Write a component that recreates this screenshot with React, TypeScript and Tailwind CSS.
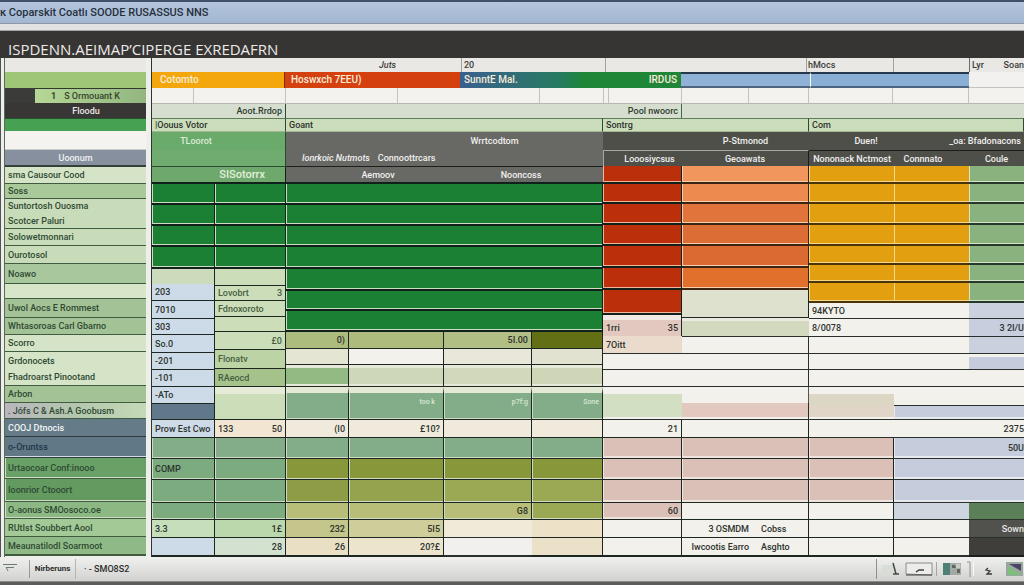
import type { ReactNode } from "react";
import { clsx } from "clsx";

interface Cell {
  c: string;
  t?: ReactNode;
  r?: string;
  span?: number;
}

interface Row {
  h: string;
  cells: Cell[];
}

interface SheetProps {
  label: string;
  cols: number[];
  rows: Row[];
}

const LINE = "border-b border-r border-[#1d2620]";
const ROW = "border-b border-[#2b2f2c]";
const THICK = "border-b-2 border-r border-[#10201a] ";
const EDGE = "shadow-[inset_1px_-1px_0_0_#cfdcc4] ";
const SIDE = "border-b border-[#3f5c41] text-[#2f4a33] ";

const GREEN = THICK + EDGE + "bg-[#1b8034]";
const RED = THICK + "shadow-[inset_1px_-1px_0_0_#f3b49a] bg-[#bb300b]";
const AMBER = "border-b-2 border-[#4a3408] shadow-[inset_1px_-1px_0_0_#f5d789] bg-[#e2a010]";
const MINT = "border-b-2 border-[#26382a] shadow-[inset_1px_-1px_0_0_#d5e5cc] bg-[#8ab27f]";
const BLUE = LINE + " bg-[#cddbe8]";
const PINK = LINE + " shadow-[inset_1px_-2px_0_0_#efe4dd] bg-[#dac0b7]";
const SKY = ROW + " shadow-[inset_1px_-2px_0_0_#e6eaee] bg-[#c5cddc]";
const SAGE = LINE + " " + EDGE + "bg-[#7cab80]";
const TEAL = LINE + " " + EDGE + "bg-[#83ad88]";
const OLIVE = LINE + " " + EDGE + "bg-[#87973a]";
const MOSS = LINE + " " + EDGE + "bg-[#9ba955]";
const KHAKI = LINE + " " + EDGE + "bg-[#b8be78]";
const CREAM = LINE + " bg-[#efeadb]";
const WHITE = LINE + " bg-[#f3f1ec]";
const OPEN = ROW + " bg-[#f3f1ec]";
const HEAD = "border-b border-r border-t border-t-[#5d7d56] border-b-[#9fb893] border-r-[#2f4a33] bg-[#cbddba]";

const Sheet: React.FC<SheetProps> = ({ label, cols, rows }) => {
  const total = cols.reduce((a, b) => a + b, 0);
  return (
    <table aria-label={label} className="w-full table-fixed border-separate border-spacing-0">
      <colgroup>
        {cols.map((w, i) => (
          <col key={i} style={{ width: `${(w / total) * 100}%` }} />
        ))}
      </colgroup>
      <tbody>
        {rows.map((row, i) => (
          <tr key={i} className={row.h}>
            {row.cells.map((cell, j) => (
              <td
                key={j}
                colSpan={cell.span}
                className={clsx("overflow-hidden px-[3px] py-0 whitespace-nowrap", cell.c)}
              >
                {cell.r ? (
                  <div className="flex justify-between">
                    <span>{cell.t}</span>
                    <span>{cell.r}</span>
                  </div>
                ) : (
                  cell.t
                )}
              </td>
            ))}
          </tr>
        ))}
      </tbody>
    </table>
  );
};

const sideRows: Row[] = [
  { h: "h-[14px]", cells: [{ c: "bg-[#e9e8e5]", span: 2 }] },
  { h: "h-[16px]", cells: [{ c: "bg-[#9dc777]", span: 2 }] },
  {
    h: "h-[15px]",
    cells: [
      { c: "bg-[#3b3b39]" },
      {
        c: "border-t border-[#33382f] bg-linear-to-r from-[#b5d796] to-[#92b67f] pl-4 text-[#37472f]",
        t: (
          <span className="flex gap-2">
            <b>1</b>
            <span>S Ormouant K</span>
          </span>
        ),
      },
    ],
  },
  { h: "h-[15px]", cells: [{ c: "bg-[#383735] pl-6 text-center text-[#e8e8e4]", t: "Floodu", span: 2 }] },
  { h: "h-[13px]", cells: [{ c: "border-t border-[#28512d] bg-[#47a153]", span: 2 }] },
  { h: "h-[18px]", cells: [{ c: "bg-[#f4f3f0]", span: 2 }] },
  { h: "h-[18px]", cells: [{ c: "border-t border-b-2 border-t-[#c9cbc8] border-b-[#34403a] bg-[#87909e] text-center text-[#f0f1f3]", t: "Uoonum", span: 2 }] },
  { h: "h-[17px]", cells: [{ c: SIDE + "bg-[#d5e4c6]", t: "sma Causour Cood", span: 2 }] },
  { h: "h-[15px]", cells: [{ c: SIDE + "bg-[#a9c99a]", t: "Soss", span: 2 }] },
  { h: "h-[14px]", cells: [{ c: "bg-[#c9dcb9] text-[#2f4a33]", t: "Suntortosh Ouosma", span: 2 }] },
  { h: "h-[16px]", cells: [{ c: SIDE + "bg-[#c9dcb9]", t: "Scotcer Paluri", span: 2 }] },
  { h: "h-[17px]", cells: [{ c: SIDE + "bg-[#c9dcb9]", t: "Solowetmonnari", span: 2 }] },
  { h: "h-[18px]", cells: [{ c: SIDE + "bg-[#c9dcb9]", t: "Ourotosol", span: 2 }] },
  { h: "h-[20px]", cells: [{ c: SIDE + "bg-[#a8c79d]", t: "Noawo", span: 2 }] },
  { h: "h-[15px]", cells: [{ c: SIDE + "bg-[#d7e5c9]", span: 2 }] },
  { h: "h-[19px]", cells: [{ c: SIDE + "bg-[#a3c396]", t: "Uwol Aocs E Rommest", span: 2 }] },
  { h: "h-[17px]", cells: [{ c: SIDE + "bg-[#a3c396]", t: "Whtasoroas Carl Gbarno", span: 2 }] },
  { h: "h-[17px]", cells: [{ c: SIDE + "bg-[#d5e4c7]", t: "Scorro", span: 2 }] },
  { h: "h-[17px]", cells: [{ c: "bg-[#d5e4c7] text-[#2f4a33]", t: "Grdonocets", span: 2 }] },
  { h: "h-[17px]", cells: [{ c: SIDE + "bg-[#d5e4c7]", t: "Fhadroarst Pinootand", span: 2 }] },
  { h: "h-[17px]", cells: [{ c: SIDE + "bg-[#a3c396]", t: "Arbon", span: 2 }] },
  { h: "h-[16px]", cells: [{ c: SIDE + "bg-linear-to-r from-[#b9b6be] via-[#b4c7ae] to-[#c4dab6]", t: ". Jófs C & Ash.A Goobusm", span: 2 }] },
  { h: "h-[18px]", cells: [{ c: "border-b border-[#2c3a40] bg-[#657c88] text-[#f2f4f4]", t: "COOJ Dtnocis", span: 2 }] },
  { h: "h-[21px]", cells: [{ c: "border-b border-[#2c3a40] bg-[#617987] text-[#22364a] shadow-[inset_0_-1px_0_0_#d4dde0]", t: "o-Oruntss", span: 2 }] },
  { h: "h-[21px]", cells: [{ c: SIDE + EDGE + "bg-[#68a065]", t: "Urtaocoar Conf:inooo", span: 2 }] },
  { h: "h-[23px]", cells: [{ c: SIDE + EDGE + "bg-[#629a60]", t: "Ioonrior Ctooort", span: 2 }] },
  { h: "h-[17px]", cells: [{ c: SIDE + EDGE + "bg-[#8db884]", t: "O-aonus SMOosoco.oe", span: 2 }] },
  { h: "h-[18px]", cells: [{ c: SIDE + "bg-[#a3c996]", t: "RUtIst Soubbert Aool", span: 2 }] },
  { h: "h-[19px]", cells: [{ c: SIDE + "border-b-2 bg-[#8fba87]", t: "Meaunatilodl Soarmoot", span: 2 }] },
];

const votorHead: Row[] = [
  { h: "h-[13px]", cells: [{ c: HEAD, t: "|Oouus Votor", span: 2 }] },
  { h: "h-[18px]", cells: [{ c: "border-r border-[#2c4a30] bg-[#6aaa6b] pr-12 text-center text-[#dcecd6]", t: "TLoorot", span: 2 }] },
  { h: "h-[17px]", cells: [{ c: "border-b border-r border-[#2c4a30] bg-[#70ab6f]", span: 2 }] },
  { h: "h-[17px]", cells: [{ c: "border-b-2 border-r border-[#10201a] bg-[#6fa86d] pr-5 text-right text-[11px] text-[#e2efdc]", t: "SISotorrx", span: 2 }] },
  { h: "h-[21px]", cells: [{ c: GREEN }, { c: GREEN }] },
  { h: "h-[21px]", cells: [{ c: GREEN }, { c: GREEN }] },
  { h: "h-[21px]", cells: [{ c: GREEN }, { c: GREEN }] },
  { h: "h-[22px]", cells: [{ c: GREEN }, { c: GREEN }] },
];

const votorLeft: Row[] = [
  { h: "h-[15px]", cells: [{ c: "border-r border-[#1d2620] bg-[#cddbbd]" }] },
  { h: "h-[17px]", cells: [{ c: BLUE, t: "203" }] },
  { h: "h-[18px]", cells: [{ c: BLUE, t: "7010" }] },
  { h: "h-[16px]", cells: [{ c: BLUE, t: "303" }] },
  { h: "h-[18px]", cells: [{ c: BLUE, t: "So.0" }] },
  { h: "h-[17px]", cells: [{ c: BLUE, t: "-201" }] },
  { h: "h-[17px]", cells: [{ c: BLUE, t: "-101" }] },
  { h: "h-[17px]", cells: [{ c: BLUE, t: "-ATo" }] },
  { h: "h-[16px]", cells: [{ c: LINE + " bg-[#61788a]" }] },
];

const FERN = LINE + " bg-[#cbddb9] text-[#46603f]";
const votorRight: Row[] = [
  { h: "h-[17px]", cells: [{ c: FERN }] },
  { h: "h-[15px]", cells: [{ c: FERN, t: "Lovobrt", r: "3" }] },
  { h: "h-[16px]", cells: [{ c: FERN, t: "Fdnoxoroto" }] },
  { h: "h-[15px]", cells: [{ c: FERN }] },
  { h: "h-[18px]", cells: [{ c: FERN + " text-right", t: "£0" }] },
  { h: "h-[19px]", cells: [{ c: LINE + " bg-[#bcd3a6] text-[#46603f]", t: "Flonatv" }] },
  { h: "h-[18px]", cells: [{ c: LINE + " bg-[#a5c28b] text-[#46603f]", t: "RAeocd" }] },
  { h: "h-[7px]", cells: [{ c: "border-r border-[#1d2620] bg-[#e6ebd8]" }] },
  { h: "h-[26px]", cells: [{ c: FERN }] },
];

const votorFoot: Row[] = [
  { h: "h-[18px]", cells: [{ c: BLUE, t: "Prow Est Cwo" }, { c: LINE + " bg-[#f2e6d2]", t: "133", r: "50" }] },
  { h: "h-[21px]", cells: [{ c: TEAL }, { c: TEAL }] },
  { h: "h-[21px]", cells: [{ c: SAGE, t: "COMP" }, { c: SAGE }] },
  { h: "h-[23px]", cells: [{ c: SAGE }, { c: SAGE }] },
  { h: "h-[17px]", cells: [{ c: SAGE }, { c: SAGE }] },
  { h: "h-[18px]", cells: [{ c: LINE + " bg-[#c6deba]", t: "3.3" }, { c: LINE + " bg-[#bad8ab] text-right", t: "1£" }] },
  { h: "h-[19px]", cells: [{ c: BLUE + " border-b-2" }, { c: LINE + " border-b-2 bg-[#d3e2d0] text-right", t: "28" }] },
];

const GREY = "bg-[#686865] text-[#f0f0ee] ";
const LIP = TEAL + " border-t-[6px] border-t-[#e3e9d5] pb-2 text-right text-[7px] leading-3 text-[#d8e8d2]";
const BAND = LINE + " shadow-[inset_0_3px_0_0_#e6e9d8,inset_0_-2px_0_0_#e4e8d6] ";
const goantRows: Row[] = [
  { h: "h-[13px]", cells: [{ c: HEAD, t: "Goant", span: 4 }] },
  { h: "h-[18px]", cells: [{ c: GREY }, { c: GREY + "pl-10 text-center", t: "Wrrtcodtom", span: 3 }] },
  {
    h: "h-[17px]",
    cells: [
      {
        c: GREY + "border-b border-[#1d1f1d] pl-4",
        span: 4,
        t: (
          <span className="flex gap-2">
            <i>Ionrkoic Nutmots</i>
            <span>Connoottrcars</span>
          </span>
        ),
      },
    ],
  },
  {
    h: "h-[17px]",
    cells: [
      { c: GREY + "border-b-2 border-[#10201a]" },
      { c: GREY + "border-b-2 border-[#10201a] pr-10 text-center", t: "Aemoov" },
      { c: GREY + "border-b-2 border-[#10201a] pr-2 text-center", t: "Nooncoss", span: 2 },
    ],
  },
  { h: "h-[21px]", cells: [{ c: GREEN, span: 4 }] },
  { h: "h-[21px]", cells: [{ c: GREEN, span: 4 }] },
  { h: "h-[21px]", cells: [{ c: GREEN, span: 4 }] },
  { h: "h-[22px]", cells: [{ c: GREEN, span: 4 }] },
  { h: "h-[22px]", cells: [{ c: GREEN, span: 4 }] },
  { h: "h-[20px]", cells: [{ c: GREEN, span: 4 }] },
  { h: "h-[21px]", cells: [{ c: GREEN, span: 4 }] },
  {
    h: "h-[17px]",
    cells: [
      { c: LINE + " bg-[#acbc7d] text-right", t: "0)" },
      { c: LINE + " bg-[#adbc7c]" },
      { c: LINE + " bg-[#b2bf84] text-right", t: "5I.00" },
      { c: LINE + " bg-[#636f14]" },
    ],
  },
  { h: "h-[16px]", cells: [{ c: LINE + " bg-[#e4e5d3]" }, { c: WHITE }, { c: LINE + " bg-[#e8e7da]" }, { c: LINE + " bg-[#e2e2d0]" }] },
  { h: "h-[22px]", cells: [{ c: BAND + "bg-[#94ba84]" }, { c: BAND + "bg-[#ced8b8]" }, { c: BAND + "bg-[#d1d8bb]" }, { c: BAND + "bg-[#cfd5b7]" }] },
  { h: "h-[33px]", cells: [{ c: LIP }, { c: LIP + " pr-2", t: "too k" }, { c: LIP, t: "p7f:g" }, { c: LIP, t: "Sone" }] },
  { h: "h-[18px]", cells: [{ c: CREAM + " text-right", t: "(I0" }, { c: CREAM + " text-right", t: "£10?" }, { c: CREAM }, { c: CREAM }] },
  { h: "h-[21px]", cells: [{ c: TEAL }, { c: TEAL }, { c: TEAL }, { c: TEAL }] },
  { h: "h-[21px]", cells: [{ c: OLIVE }, { c: OLIVE }, { c: OLIVE }, { c: OLIVE }] },
  { h: "h-[23px]", cells: [{ c: LINE + " " + EDGE + "bg-[#8f9c46]" }, { c: LINE + " " + EDGE + "bg-[#95a34e]" }, { c: MOSS }, { c: MOSS }] },
  { h: "h-[17px]", cells: [{ c: KHAKI }, { c: KHAKI }, { c: KHAKI + " text-right", t: "G8" }, { c: MOSS }] },
  {
    h: "h-[18px]",
    cells: [
      { c: LINE + " bg-[#c4c68b] text-right", t: "232" },
      { c: LINE + " bg-[#cfce9b] text-right", t: "5I5" },
      { c: ROW + " bg-[#f1ead8]" },
      { c: LINE + " bg-[#ede2c8]" },
    ],
  },
  {
    h: "h-[19px]",
    cells: [
      { c: LINE + " border-b-2 bg-[#e8dfc4] text-right", t: "26" },
      { c: LINE + " border-b-2 bg-[#ece4cd] text-right", t: "20?£" },
      { c: ROW + " border-b-2 bg-[#f2f0ee]" },
      { c: LINE + " border-b-2 bg-[#ebe1c8]" },
    ],
  },
];

const DARK = "bg-[#4f4f4a] text-[#f0f0ee] ";
const sontrgHead: Row[] = [
  { h: "h-[13px]", cells: [{ c: HEAD, t: "Sontrg", span: 2 }] },
  { h: "h-[18px]", cells: [{ c: DARK }, { c: DARK + "text-center", t: "P-Stmonod" }] },
  {
    h: "h-[16px]",
    cells: [
      { c: DARK + "border-t border-l border-[#a6a6a2] pl-4 text-center", t: "Looosiycsus" },
      { c: DARK + "border-t border-r border-t-[#a6a6a2] border-r-[#1c1c1a] text-center", t: "Geoawats" },
    ],
  },
];

const sontrgLeft: Row[] = [
  { h: "h-[18px]", cells: [{ c: RED }] },
  { h: "h-[20px]", cells: [{ c: RED }] },
  { h: "h-[21px]", cells: [{ c: RED }] },
  { h: "h-[21px]", cells: [{ c: RED }] },
  { h: "h-[22px]", cells: [{ c: RED }] },
  { h: "h-[22px]", cells: [{ c: RED }] },
  { h: "h-[25px]", cells: [{ c: RED }] },
  { h: "h-[5px]", cells: [{ c: "border-r border-[#1d2620] bg-[#efe8e3]" }] },
  { h: "h-[16px]", cells: [{ c: "border-r border-[#1d2620] bg-[#e3c8bf]", t: "1rri", r: "35" }] },
  { h: "h-[18px]", cells: [{ c: ROW + " bg-[#eadbcd]", t: "7Oitt" }] },
  { h: "h-[16px]", cells: [{ c: OPEN }] },
  { h: "h-[17px]", cells: [{ c: OPEN }] },
  { h: "h-[7px]", cells: [{ c: "bg-[#f3f1ec]" }] },
  { h: "h-[26px]", cells: [{ c: ROW + " shadow-[inset_0_-2px_0_0_#f3f1ec] bg-[#d3dfc2]" }] },
];

const ORANGE = "border-b-2 border-r border-[#3c2413] shadow-[inset_1px_-1px_0_0_#f8cfae] ";
const sontrgRight: Row[] = [
  { h: "h-[18px]", cells: [{ c: ORANGE + "bg-[#f1965c]" }] },
  { h: "h-[20px]", cells: [{ c: ORANGE + "bg-[#ec8a4f]" }] },
  { h: "h-[21px]", cells: [{ c: ORANGE + "bg-[#e0743a]" }] },
  { h: "h-[21px]", cells: [{ c: ORANGE + "bg-[#dc6e35]" }] },
  { h: "h-[22px]", cells: [{ c: ORANGE + "bg-[#da6a31]" }] },
  { h: "h-[22px]", cells: [{ c: ORANGE + "bg-[#e2702d]" }] },
  { h: "h-[28px]", cells: [{ c: LINE + " bg-[#dfe1cf]" }] },
  { h: "h-[19px]", cells: [{ c: ROW + " shadow-[inset_0_3px_0_0_#eceadf] bg-[#d3d9bf]" }] },
  { h: "h-[17px]", cells: [{ c: OPEN + " border-r" }] },
  { h: "h-[16px]", cells: [{ c: OPEN + " border-r" }] },
  { h: "h-[17px]", cells: [{ c: OPEN + " border-r" }] },
  { h: "h-[16px]", cells: [{ c: "border-r border-[#55554f] bg-[#f3f1ec]" }] },
  { h: "h-[17px]", cells: [{ c: ROW + " border-r shadow-[inset_0_-2px_0_0_#f3f1ec] bg-[#e1c9c0]" }] },
];

const sontrgFoot: Row[] = [
  { h: "h-[18px]", cells: [{ c: WHITE + " text-right", t: "21" }, { c: WHITE }] },
  { h: "h-[21px]", cells: [{ c: PINK }, { c: PINK }] },
  { h: "h-[21px]", cells: [{ c: PINK }, { c: PINK }] },
  { h: "h-[23px]", cells: [{ c: PINK }, { c: PINK }] },
  { h: "h-[17px]", cells: [{ c: PINK + " text-right", t: "60" }, { c: WHITE }] },
  {
    h: "h-[18px]",
    cells: [
      { c: WHITE },
      {
        c: WHITE,
        t: (
          <span className="flex gap-3">
            <span className="w-16 text-right">3 OSMDM</span>
            <span>Cobss</span>
          </span>
        ),
      },
    ],
  },
  {
    h: "h-[19px]",
    cells: [
      { c: WHITE + " border-b-2" },
      {
        c: WHITE + " border-b-2",
        t: (
          <span className="flex gap-3">
            <span className="w-16 text-right">Iwcootis Earro</span>
            <span>Asghto</span>
          </span>
        ),
      },
    ],
  },
];

const comRows: Row[] = [
  { h: "h-[13px]", cells: [{ c: HEAD, t: "Com", span: 3 }] },
  { h: "h-[18px]", cells: [{ c: DARK + "pl-8 text-center", t: "Duen!" }, { c: DARK + "text-right", t: "_oa: Bfadonacons", span: 2 }] },
  {
    h: "h-[16px]",
    cells: [
      { c: DARK + "border-t border-[#1c1c1a] text-right", t: "Nononack Nctmost" },
      { c: DARK + "border-t border-[#1c1c1a] pr-5 text-center", t: "Connnato" },
      { c: DARK + "border-t border-[#1c1c1a] text-center", t: "Coule" },
    ],
  },
  { h: "h-[18px]", cells: [{ c: AMBER }, { c: AMBER }, { c: MINT }] },
  { h: "h-[20px]", cells: [{ c: AMBER }, { c: AMBER }, { c: MINT }] },
  { h: "h-[21px]", cells: [{ c: AMBER }, { c: AMBER }, { c: MINT }] },
  { h: "h-[21px]", cells: [{ c: AMBER }, { c: AMBER }, { c: MINT }] },
  { h: "h-[19px]", cells: [{ c: AMBER }, { c: AMBER }, { c: MINT }] },
  { h: "h-[18px]", cells: [{ c: AMBER }, { c: AMBER }, { c: MINT }] },
  { h: "h-[20px]", cells: [{ c: AMBER }, { c: AMBER }, { c: MINT }] },
  { h: "h-[16px]", cells: [{ c: OPEN, t: "94KYTO", span: 2 }, { c: ROW + " bg-[#cbd2df]" }] },
  { h: "h-[18px]", cells: [{ c: OPEN, t: "8/0078", span: 2 }, { c: ROW + " bg-[#c7cedd] pr-0 text-right", t: "3 2I/U" }] },
  { h: "h-[17px]", cells: [{ c: OPEN, span: 2 }, { c: ROW + " bg-[#c9d0de]" }] },
  { h: "h-[16px]", cells: [{ c: OPEN, span: 2 }, { c: ROW + " shadow-[inset_0_3px_0_0_#f3f1ec] bg-[#c5cddd]" }] },
  { h: "h-[17px]", cells: [{ c: OPEN, span: 3 }] },
  { h: "h-[7px]", cells: [{ c: "bg-[#f3f1ec]", span: 3 }] },
  { h: "h-[12px]", cells: [{ c: "bg-[#dcd7c4]" }, { c: OPEN, span: 2 }] },
  { h: "h-[14px]", cells: [{ c: ROW + " shadow-[inset_0_-2px_0_0_#f3f1ec] bg-[#e0d5c6]" }, { c: SKY, span: 2 }] },
  { h: "h-[18px]", cells: [{ c: OPEN }, { c: OPEN + " pr-0 text-right", t: "2375", span: 2 }] },
  { h: "h-[21px]", cells: [{ c: PINK }, { c: SKY + " pr-0 text-right", t: "50U", span: 2 }] },
  { h: "h-[21px]", cells: [{ c: PINK }, { c: SKY, span: 2 }] },
  { h: "h-[23px]", cells: [{ c: PINK }, { c: SKY, span: 2 }] },
  { h: "h-[17px]", cells: [{ c: WHITE }, { c: ROW + " bg-[#cdd5de]" }, { c: ROW + " bg-[#5b7f57]" }] },
  { h: "h-[18px]", cells: [{ c: WHITE }, { c: OPEN }, { c: ROW + " bg-[#51514d] pr-0 text-right text-[#e8e8e4]", t: "Sown" }] },
  { h: "h-[19px]", cells: [{ c: WHITE + " border-b-2" }, { c: OPEN + " border-b-2" }, { c: "border-b-2 border-[#1d1f1d] bg-[#3f3e3b]" }] },
];

const TICK = "border-r border-[#c4c3be] ";

const Strips: React.FC = () => (
  <>
    <div className="grid h-[14px] grid-cols-[227fr_82fr_145fr_200fr_88fr_75fr_55fr] bg-[#e9e8e5] leading-[14px] whitespace-nowrap text-[#3d3d3b]">
      <div />
      <i>Juts</i>
      <div className="border-x border-[#a3a29e] px-0.5">20</div>
      <div />
      <div className="border-r border-l border-[#a3a29e] px-px">hMocs</div>
      <div />
      <div className="flex justify-between overflow-hidden border-l border-[#6d6c69] pl-0.5">
        <span>Lyr</span>
        <span>Soan</span>
      </div>
    </div>
    <div className="grid h-[16px] grid-cols-[133fr_175fr_221fr_129fr_159fr_55fr] text-[10px] leading-4 font-medium whitespace-nowrap text-[#f8ecd8]">
      <div className="border-r border-[#6b3413] bg-[#f4a70d] px-2">Cotomto</div>
      <div className="bg-[#d4410f] px-1.5">Hoswxch 7EEU)</div>
      <div className="flex justify-between bg-linear-to-r from-[#3a5f8e] via-[#267a60] via-45% to-[#1f8638] to-55% px-1">
        <span>SunntE Mal.</span>
        <span>IRDUS</span>
      </div>
      <div className="border-y-2 border-t-[#27374c] border-b-[#4c6480] bg-[#8fb2d6]" />
      <div className="border-y-2 border-l border-t-[#27374c] border-b-[#4c6480] border-l-white bg-[#8aafd5]" />
      <div className="border-b border-[#c4c3be] bg-[#f3f1f0]" />
    </div>
    <div className="grid h-[15px] grid-cols-[42fr_92fr_112fr_142fr_64fr_5fr_73fr_67fr_60fr_84fr_76fr_55fr] bg-[#f3f2ef]">
      <div className={TICK} />
      <div className={TICK} />
      <div className={TICK} />
      <div className={TICK} />
      <div className={TICK} />
      <div className={TICK} />
      <div className={TICK} />
      <div className={TICK} />
      <div className={TICK} />
      <div className={TICK} />
      <div className={TICK} />
      <div />
    </div>
    <div className="grid h-[15px] grid-cols-[134fr_396fr_342fr] border-t border-[#b5b9ae] bg-[#d6dfcf] text-right leading-[14px] text-[#2f3d30]">
      <div className="border-r border-[#2f4a33] pr-[3px]">Aoot.Rrdop</div>
      <div className="border-r border-[#3f6a43] pr-[3px]">Pool nwoorc</div>
      <div />
    </div>
  </>
);

const StatusBar: React.FC = () => (
  <footer className="flex h-6 items-center bg-linear-to-b from-[#f0f0ef] to-[#d2d2d1] text-[#2e2e2c]">
    <button aria-label="Sheet list" className="flex h-[18px] w-[30px] items-center justify-center border-r border-[#9a9a98] pr-2">
      <svg width="18" height="12" viewBox="0 0 18 12" fill="none" stroke="#6f7a72">
        <path d="M1 1.5h14M4 4.5h8M4 4l2 4" />
      </svg>
    </button>
    <button className="h-5 w-[46px] border-r border-[#b4b4b2] text-center text-[8px] font-bold">Nirberuns</button>
    <button className="px-2 text-[9px]">· - SMO8S2</button>
    <div className="ml-auto flex h-5 items-center gap-0.5 border-l border-[#8f8f8d] pl-0.5">
      <button aria-label="Pointer" className="px-0.5">
        <svg width="20" height="15" viewBox="0 0 20 15" fill="none">
          <path d="M1 3h13v10H1z" fill="#d9ddd8" />
          <path d="M12 1l3 11M12 12h6" stroke="#454c45" strokeWidth="1.5" />
        </svg>
      </button>
      <button aria-label="Input line" className="border-r border-[#a5a5a3] pr-0.5">
        <svg width="29" height="14" viewBox="0 0 29 14" fill="none">
          <path d="M1 12V1h26v12z" fill="#ececea" stroke="#8c8c8a" />
          <path d="M1 13h26" stroke="#3f403e" />
          <path d="M11 10l3-2h5" stroke="#3f403e" strokeWidth="1.5" />
        </svg>
      </button>
      <button aria-label="Preview" className="pl-1">
        <svg width="28" height="16" viewBox="0 0 28 16" fill="none">
          <path d="M0 2h18v12H0z" fill="#a3aaa3" />
          <path d="M0 2h7v12H0z" fill="#4d7f74" />
          <path d="M9 4h4v3H9zM14 8h3v4h-3z" fill="#5e665f" />
          <circle cx="15" cy="5" r="2.5" fill="#c9ccc8" />
          <path d="M24 1h3v15" stroke="#8f8f8d" />
        </svg>
      </button>
      <button aria-label="Zoom" className="border-l border-[#f8f8f7] px-2.5">
        <svg width="10" height="14" viewBox="0 0 10 14" fill="none">
          <path d="M4 6l-2 2 4 1-3 3h5" stroke="#3b3c3a" strokeWidth="1.3" />
        </svg>
      </button>
      <button aria-label="Chart" className="pr-px">
        <svg width="17" height="14" viewBox="0 0 17 14">
          <path d="M0 0h17v14H0z" fill="#9aa79d" />
          <path d="M3 2l12 7V2z" fill="#4c4368" />
          <path d="M2 4l13 9H2z" fill="#7dc07c" />
        </svg>
      </button>
    </div>
  </footer>
);

const App: React.FC = () => {
  return (
    <div className="w-full overflow-hidden bg-[#5c5c5a] font-['Roboto','Liberation_Sans',sans-serif] text-[9px] leading-3 font-medium text-[#2d332e]">
      <header>
        <div className="flex h-6 items-center border-t-2 border-b border-t-[#3f4f68] border-b-[#8b97a6] bg-linear-to-b from-[#b4c5dc] to-[#a2b7d3]">
          <span className="text-[11px] whitespace-nowrap text-[#26303c]">
            к Coparskit Coatlı SOODE RUSASSUS NNS
          </span>
        </div>
        <div className="h-[7px] border-b border-[#a5a5a2] bg-[#e1e2e1]" />
        <h1 className="flex h-[27px] items-center overflow-hidden bg-[#373534] px-2 pt-2 font-['Open_Sans','Liberation_Sans',sans-serif] text-[15px] leading-5 font-normal whitespace-nowrap text-[#ecebe8]">
          ISPDENN.AEIMAP’CIPERGE EXREDAFRN
        </h1>
      </header>
      <main className="flex border-l border-[#4b5450] bg-[#eeefeb] pl-[3px]">
        <aside className="w-[142px] shrink-0 border-l border-[#5a6a5a]">
          <Sheet label="Categories" cols={[30, 111]} rows={sideRows} />
        </aside>
        <div className="ml-[5px] min-w-0 flex-1 border-l border-[#2c352e]">
          <Strips />
          <div className="flex">
            <section className="min-w-0 flex-[134]">
              <Sheet label="Votor" cols={[63, 71]} rows={votorHead} />
              <div className="flex">
                <div className="flex-[63]">
                  <Sheet label="Votor codes" cols={[1]} rows={votorLeft} />
                </div>
                <div className="flex-[71]">
                  <Sheet label="Votor names" cols={[1]} rows={votorRight} />
                </div>
              </div>
              <Sheet label="Votor totals" cols={[63, 71]} rows={votorFoot} />
            </section>
            <section className="min-w-0 flex-[317]">
              <Sheet label="Goant" cols={[63, 95, 88, 71]} rows={goantRows} />
            </section>
            <section className="min-w-0 flex-[206]">
              <Sheet label="Sontrg" cols={[79, 127]} rows={sontrgHead} />
              <div className="flex">
                <div className="flex-[79]">
                  <Sheet label="Sontrg left" cols={[1]} rows={sontrgLeft} />
                </div>
                <div className="flex-[127]">
                  <Sheet label="Sontrg right" cols={[1]} rows={sontrgRight} />
                </div>
              </div>
              <Sheet label="Sontrg totals" cols={[79, 127]} rows={sontrgFoot} />
            </section>
            <section className="min-w-0 flex-[215]">
              <Sheet label="Com" cols={[85, 75, 55]} rows={comRows} />
            </section>
          </div>
        </div>
      </main>
      <StatusBar />
      <div className="h-[5px] border-t border-[#8a8a88] bg-[#5c5c5a]" />
    </div>
  );
};

export default App;
